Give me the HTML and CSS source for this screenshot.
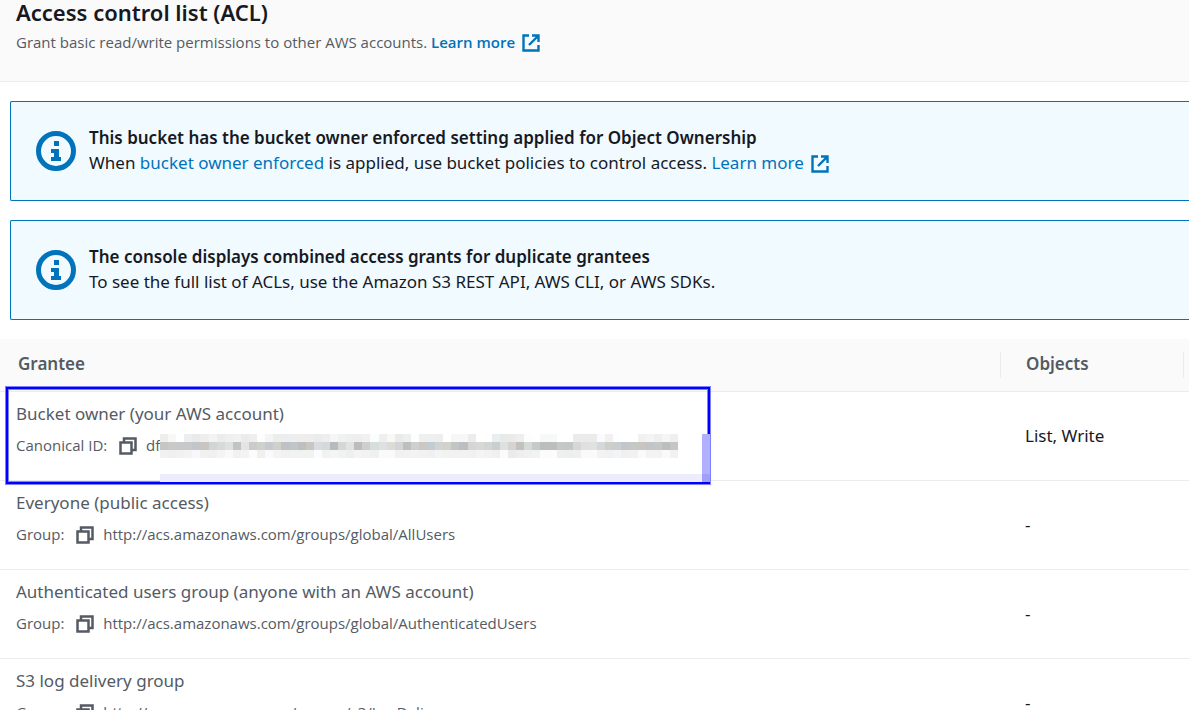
FILE: index.html
```
<!DOCTYPE html>
<html lang="en">
<head>
    <meta charset="UTF-8">
    <title>Access control list (ACL)</title>
    <link rel="stylesheet" href="styles.css">
</head>
<body>
<svg class="sprite" aria-hidden="true">
    <symbol id="icon-external" viewBox="0 0 18 18">
        <path d="M7 1.5H1.5v15h15V11M10 1.5h6.5V8M16 2L7 11" fill="none" stroke="currentColor" stroke-width="2.4"/>
    </symbol>
    <symbol id="icon-info" viewBox="0 0 40 40">
        <circle cx="20" cy="20" r="17.5" fill="none" stroke="currentColor" stroke-width="5"/>
        <path d="M18 10h5v5h-5zM15 18h8v8h2v4H15v-4h3v-4h-3z" fill="currentColor"/>
    </symbol>
    <symbol id="icon-copy" viewBox="0 0 18 18">
        <path d="M5 5V1.5h11.5V13H13M1.5 5.5h11v11h-11z" fill="none" stroke="currentColor" stroke-width="2.5"/>
    </symbol>
</svg>
<header class="panel-header">
    <h2>Access control list (ACL)</h2>
    <p>Grant basic read/write permissions to other AWS accounts. <a class="learn" href="#">Learn more <svg class="icon icon-external"><use href="#icon-external"/></svg></a></p>
</header>
<main>
    <section class="alerts">
        <div class="alert">
            <svg class="icon-info"><use href="#icon-info"/></svg>
            <div class="alert-text">
                <h3>This bucket has the bucket owner enforced setting applied for Object Ownership</h3>
                <p>When <a href="#">bucket owner enforced</a> is applied, use bucket policies to control access. <a href="#">Learn more <svg class="icon icon-external"><use href="#icon-external"/></svg></a></p>
            </div>
        </div>
        <div class="alert">
            <svg class="icon-info"><use href="#icon-info"/></svg>
            <div class="alert-text">
                <h3>The console displays combined access grants for duplicate grantees</h3>
                <p>To see the full list of ACLs, use the Amazon S3 REST API, AWS CLI, or AWS SDKs.</p>
            </div>
        </div>
    </section>
    <table class="grants">
        <colgroup>
            <col>
            <col class="col-objects">
            <col class="col-rest">
        </colgroup>
        <thead>
        <tr><th>Grantee</th><th class="objects">Objects</th><th class="rest"></th></tr>
        </thead>
        <tbody>
        <tr>
            <td class="marked">Bucket owner (your AWS account)
                <div class="detail">Canonical ID: <button class="copy" aria-label="Copy canonical ID"><svg class="icon"><use href="#icon-copy"/></svg></button> df<svg class="mosaic" viewBox="0 0 64 3" preserveAspectRatio="none"></svg></div>
                <div class="mark"><span class="mark-bottom"></span><span class="mark-right"></span></div>
            </td>
            <td class="access">List, Write</td>
            <td></td>
        </tr>
        <tr>
            <td>Everyone (public access)
                <div class="detail">Group: <button class="copy" aria-label="Copy group"><svg class="icon"><use href="#icon-copy"/></svg></button> http://acs.amazonaws.com/groups/global/AllUsers</div>
            </td>
            <td class="access">-</td>
            <td></td>
        </tr>
        <tr>
            <td>Authenticated users group (anyone with an AWS account)
                <div class="detail">Group: <button class="copy" aria-label="Copy group"><svg class="icon"><use href="#icon-copy"/></svg></button> http://acs.amazonaws.com/groups/global/AuthenticatedUsers</div>
            </td>
            <td class="access">-</td>
            <td></td>
        </tr>
        <tr>
            <td>S3 log delivery group
                <div class="detail">Group: <button class="copy" aria-label="Copy group"><svg class="icon"><use href="#icon-copy"/></svg></button> http://acs.amazonaws.com/groups/s3/LogDelivery</div>
            </td>
            <td class="access">-</td>
            <td></td>
        </tr>
        </tbody>
    </table>
</main>
<script src="mosaic.js"></script>
</body>
</html>
```
FILE: styles.css
```
*{
    box-sizing: border-box;
}
html{
    overflow: hidden;
}
body{
    margin: 0;
    font-family: "Noto Sans", "Open Sans", sans-serif;
    font-size: 17px;
    line-height: 25px;
    color: #16191f;
    background-color: #fff;
}
h2, h3, p{
    margin: 0;
}
h2, h3, th{
    font-weight: 600;
}
a{
    color: #0073bb;
    text-decoration: none;
}
.sprite{
    display: none;
}
.icon{
    width: 18px;
    height: 18px;
    vertical-align: -4px;
}
.icon-external{
    margin-left: 3px;
}
.panel-header{
    height: 82px;
    background-color: #fafafa;
    border-bottom: 1px solid #eaeded;
    padding-left: 16px;
}
.panel-header h2{
    font-size: 22px;
    line-height: 24px;
    margin-bottom: 6px;
}
.panel-header p, .detail{
    font-family: "Open Sans", "Noto Sans", sans-serif;
    font-size: 15px;
    color: #545b64;
}
.learn{
    font-weight: 600;
}
.alerts{
    display: flex;
    flex-direction: column;
    gap: 19px;
    padding: 19px 0 19px 10px;
}
.alert{
    display: flex;
    gap: 13px;
    align-items: center;
    height: 100px;
    padding-left: 25px;
    border: 1px solid #0073bb;
    border-right: none;
    border-radius: 2px 0 0 2px;
    background-color: #f1faff;
}
.alert-text{
    padding-bottom: 2px;
}
.icon-info{
    width: 40px;
    height: 40px;
    color: #0073bb;
}
.alert h3{
    font-size: 17px;
}
.grants{
    width: 100%;
    table-layout: fixed;
    border-spacing: 0;
}
.col-objects{
    width: 183px;
}
.col-rest{
    width: 6px;
}
.grants th{
    position: relative;
    height: 53px;
    text-align: left;
    padding: 0 18px 3px;
    background-color: #fafafa;
    border-bottom: 1px solid #eaeded;
    color: #545b64;
}
.grants .objects{
    padding-left: 26px;
}
/* column dividers in the header row */
.objects::before, .rest::before{
    content: "";
    position: absolute;
    left: 0;
    top: 13px;
    height: 26px;
    border-left: 1px solid #eaeded;
}
.grants .rest{
    padding: 0;
}
.grants td{
    height: 89px;
    padding: 9px 0 0 16px;
    vertical-align: top;
    color: #545b64;
    border-bottom: 1px solid #eaeded;
}
.grants .access{
    padding: 0 0 2px 25px;
    vertical-align: middle;
    color: #16191f;
}
.grants td:last-child{
    padding: 0;
}
.detail{
    margin-top: 7px;
    white-space: nowrap;
}
.copy{
    border: none;
    background: none;
    padding: 0;
    margin: 0 5px 0 8px;
    color: #545b64;
}
.mosaic{
    width: 518px;
    height: 24px;
    vertical-align: middle;
    margin: -5px 0 -3px;
}
.marked{
    position: relative;
}
/* blue frame round the owner row */
.mark{
    position: absolute;
    left: 6px;
    top: -5px;
    width: 704px;
    height: 97px;
    border: 2px solid #00f;
    box-shadow: 0 0 0 1px #8080ff, inset 0 0 0 1px #8080ff;
}
.mark-bottom{
    position: absolute;
    left: 152px;
    right: -2px;
    bottom: 0;
    height: 8px;
    background-color: #ececfc;
}
.mark-right{
    position: absolute;
    right: -2px;
    bottom: 0;
    width: 8px;
    height: 48px;
    background: linear-gradient(#b0b0ff 40px, #a0a0fc 40px);
}
```
FILE: mosaic.js
```
// rows of the masked id, one colour per cell
var rows = [
    "eeeeef f8f8f8 ffffff eeeeee eaeaea eeeeee f2f3f3 ececec eeefef f1f1f1 ebebeb eeeeee fdfdfd f5f5f5 ebecec ecedee eeeeee eeeeee ecedec e9ecea eeeeee f6f6f6 f0f1f1 eeefef eeeeee f1f1f1 fcfefd eeefef f8f8f8 eaeaea eeeeee fdfffd eeefef eeefef eeeeee ffffff f7f7f7 f7f7f7 ececec ffffff fefefe ecedee e6eae8 eaebea eeeeee fdfdfd ffffff f8f8f8 f8f8f8 ffffff ffffff ebebeb ebebeb ebebeb f9fbff f0f1f0 fcfeff ffffff ffffff f1f1f1 f4f4f4 eeefee f5f5f5 efefee",
    "c6c6c4 c9cac7 c8c9ca c6c8ca c3c6c9 c7c6c0 d2d5d5 d7dada dfe0e0 bfc4c4 e4e4e4 cccbcb cfd1ce c6cacf d1cfca bec2c5 c0c5c9 bfbfbf c8c7c2 d8dce0 d6d9d9 b7bbbb d6d6d6 e2e2e2 bcbdbb cfcecd d7dfdc dee0e1 dddbd6 d3d4d5 bcbfbe cfcfcf cbc8c4 c3ccd3 d0d4d1 d2d1cb c0c5c8 bbbfbf d5d5d5 d8d8d6 d3d4d4 c8cfd2 dfe0e0 d4d5d3 c2c1bb d3dbd8 c7cbc7 bcbdbd bcbdbd c5c8c7 c3c7c7 d7d7d7 e0e0e0 e1e1e1 d3d8d9 cecfca c8cdd1 c2c6c8 c4c8c8 cbc5c0 c1c5c7 c3c7c9 bbc0be c4c6c6",
    "f1f1f1 eff0f0 f1f1f1 f3f3f3 f7f8fb f1f1f1 f0f0f0 f4f4f4 f9f9f9 f1f1f1 f3f3f3 fcfcfc f0f1ef fafafc f4f4f4 f0f1f0 f1f2f2 f1f2f2 f1f2f2 fbfcff f2f2f2 f4f5f5 f1f2f4 eeefef f4f4f4 f2f2f2 eff1f0 fafafa fafafa f1f1f1 f2f2f2 f3f3f3 f2f2f2 eff0f1 f4f4f4 f2f2f2 f2f2f2 f1f2f2 f1f1f1 f4f4f4 f2f2f2 eff0f0 fbfbfb ebecea eeeeee eff0f0 f1f2f1 fcfcfc fcfcfc eeefef eeeeee eeefef fafafa fafafa f3f3f3 f0f1f4 f4f4f4 eff0f2 f1f1f1 fafafa f3f3f3 f3f3f3 fafafa f2f2f2"
];
var mosaic = document.getElementsByClassName("mosaic")[0];
for(var y=0;y<rows.length;y++){
    var cells = rows[y].split(" ");
    for(var x=0;x<cells.length;x++){
        var rect = document.createElementNS("http://www.w3.org/2000/svg","rect");
        rect.setAttribute("x",x);
        rect.setAttribute("y",y);
        rect.setAttribute("width",1);
        rect.setAttribute("height",1);
        rect.setAttribute("fill","#" + cells[x]);
        rect.setAttribute("shape-rendering","crispEdges");
        mosaic.appendChild(rect);
    }
}
```
